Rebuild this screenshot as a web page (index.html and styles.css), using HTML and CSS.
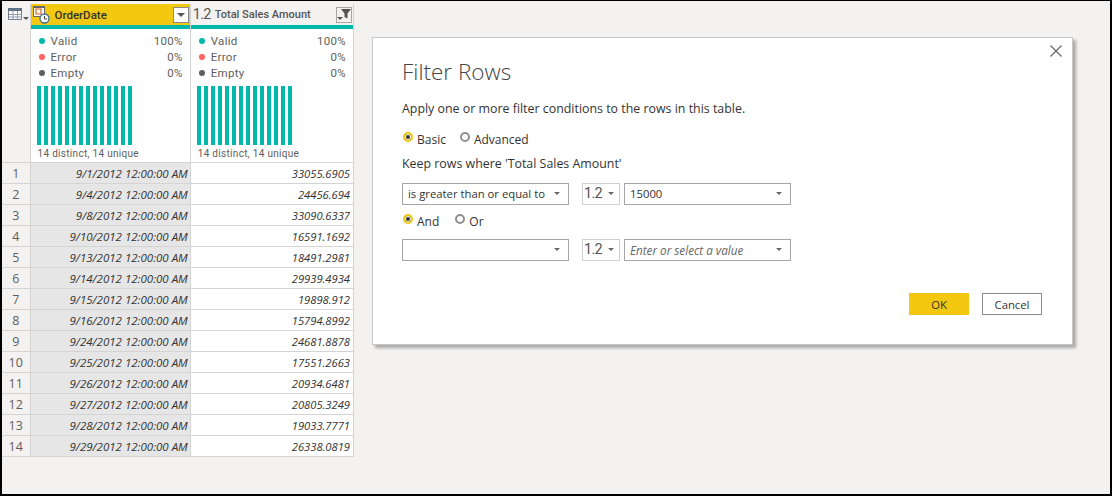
FILE: index.html
```html
<!DOCTYPE html>
<html lang="en">
<head>
    <meta charset="UTF-8">
    <title>Filter Rows</title>
    <link rel="stylesheet" href="styles.css">
</head>
<body>
    <div class="frame">
        <table class="grid">
            <thead>
                <tr class="head-row">
                    <th class="corner">
                        <svg width="21" height="13" viewBox="0 0 21 13">
                            <path d="M0.5 0.5h13v11h-13z" fill="#fff" stroke="#6b7a8c"/>
                            <path d="M0 0h14v3h-14z" fill="#5f7389"/>
                            <path d="M1 6.5h13M1 9h13M5 3v9M9.500 3v9" stroke="#8f9cab" fill="none"/>
                            <path d="M15 9h6l-3 3z" fill="#555"/>
                        </svg>
                    </th>
                    <th class="col-date selected">
                        <div class="head-cell">
                            <svg class="type-icon" width="17" height="20" viewBox="0 0 17 20">
                                <path d="M0.500 2.500h11v10h-11z" fill="#fff" stroke="#666"/>
                                <path d="M0 2h12v2h-12z" fill="#666"/>
                                <path d="M3 5h5v5h-5z" fill="none" stroke="#d4622a" stroke-width="1.200"/>
                                <circle cx="11.500" cy="14.500" r="4.500" fill="#fff" stroke="#3d6a8e" stroke-width="1.300"/>
                                <path d="M11.500 12v3h2.500" fill="none" stroke="#444"/>
                            </svg>
                            <span class="head-name name-on">OrderDate</span>
                            <span class="filter-btn btn-on">
                                <svg width="8" height="4" viewBox="0 0 8 4"><path d="M0 0h8l-4 4z" fill="#555"/></svg>
                            </span>
                        </div>
                    </th>
                    <th class="col-amount">
                        <div class="head-cell">
                            <span class="type-num">1.2</span>
                            <span class="head-name">Total Sales Amount</span>
                            <span class="filter-btn">
                                <svg width="14" height="12" viewBox="0 0 14 12">
                                    <path d="M4 0h10l-3.500 4.500v5l-3 -1.500v-3.500z" fill="#555"/>
                                    <path d="M0 8h6l-3 3z" fill="#555"/>
                                </svg>
                            </span>
                        </div>
                    </th>
                </tr>
                <tr class="profile-row">
                    <td class="num-blank"></td>
                    <td>
                        <div class="quality-bar"></div>
                        <div class="profile">
                            <div class="stat"><i class="dot dot-valid"></i><span class="stat-name">Valid</span><span>100%</span></div>
                            <div class="stat"><i class="dot dot-error"></i><span class="stat-name">Error</span><span>0%</span></div>
                            <div class="stat"><i class="dot dot-empty"></i><span class="stat-name">Empty</span><span>0%</span></div>
                            <div class="bars"><i></i><i></i><i></i><i></i><i></i><i></i><i></i><i></i><i></i><i></i><i></i><i></i><i></i><i></i></div>
                            <div class="distinct">14 distinct, 14 unique</div>
                        </div>
                    </td>
                    <td>
                        <div class="quality-bar"></div>
                        <div class="profile">
                            <div class="stat"><i class="dot dot-valid"></i><span class="stat-name">Valid</span><span>100%</span></div>
                            <div class="stat"><i class="dot dot-error"></i><span class="stat-name">Error</span><span>0%</span></div>
                            <div class="stat"><i class="dot dot-empty"></i><span class="stat-name">Empty</span><span>0%</span></div>
                            <div class="bars"><i></i><i></i><i></i><i></i><i></i><i></i><i></i><i></i><i></i><i></i><i></i><i></i><i></i><i></i></div>
                            <div class="distinct">14 distinct, 14 unique</div>
                        </div>
                    </td>
                </tr>
            </thead>
            <tbody>
                <tr><td class="num">1</td><td class="date">9/1/2012 12:00:00 AM</td><td class="amount">33055.6905</td></tr>
                <tr><td class="num">2</td><td class="date">9/4/2012 12:00:00 AM</td><td class="amount">24456.694</td></tr>
                <tr><td class="num">3</td><td class="date">9/8/2012 12:00:00 AM</td><td class="amount">33090.6337</td></tr>
                <tr><td class="num">4</td><td class="date">9/10/2012 12:00:00 AM</td><td class="amount">16591.1692</td></tr>
                <tr><td class="num">5</td><td class="date">9/13/2012 12:00:00 AM</td><td class="amount">18491.2981</td></tr>
                <tr><td class="num">6</td><td class="date">9/14/2012 12:00:00 AM</td><td class="amount">29939.4934</td></tr>
                <tr><td class="num">7</td><td class="date">9/15/2012 12:00:00 AM</td><td class="amount">19898.912</td></tr>
                <tr><td class="num">8</td><td class="date">9/16/2012 12:00:00 AM</td><td class="amount">15794.8992</td></tr>
                <tr><td class="num">9</td><td class="date">9/24/2012 12:00:00 AM</td><td class="amount">24681.8878</td></tr>
                <tr><td class="num">10</td><td class="date">9/25/2012 12:00:00 AM</td><td class="amount">17551.2663</td></tr>
                <tr><td class="num">11</td><td class="date">9/26/2012 12:00:00 AM</td><td class="amount">20934.6481</td></tr>
                <tr><td class="num">12</td><td class="date">9/27/2012 12:00:00 AM</td><td class="amount">20805.3249</td></tr>
                <tr><td class="num">13</td><td class="date">9/28/2012 12:00:00 AM</td><td class="amount">19033.7771</td></tr>
                <tr><td class="num">14</td><td class="date">9/29/2012 12:00:00 AM</td><td class="amount">26338.0819</td></tr>
            </tbody>
        </table>

        <div class="dialog">
            <button class="close" aria-label="Close">
                <svg width="12" height="12" viewBox="0 0 12 12"><path d="M0.500 0.500l11 11M11.500 0.500l-11 11" stroke="#666" stroke-width="1.200" fill="none"/></svg>
            </button>
            <h1>Filter Rows</h1>
            <p class="intro">Apply one or more filter conditions to the rows in this table.</p>
            <div class="radios mode">
                <label class="radio"><i class="mark on"></i>Basic</label>
                <label class="radio"><i class="mark"></i>Advanced</label>
            </div>
            <p class="keep">Keep rows where 'Total Sales Amount'</p>
            <div class="cond">
                <div class="select sel-op">is greater than or equal to<i class="caret"></i></div>
                <div class="select sel-type">1.2<i class="caret"></i></div>
                <div class="select sel-val">15000<i class="caret"></i></div>
            </div>
            <div class="radios andor">
                <label class="radio"><i class="mark on"></i>And</label>
                <label class="radio"><i class="mark"></i>Or</label>
            </div>
            <div class="cond cond-second">
                <div class="select sel-op"><i class="caret"></i></div>
                <div class="select sel-type">1.2<i class="caret"></i></div>
                <div class="select sel-val placeholder">Enter or select a value<i class="caret"></i></div>
            </div>
            <div class="actions">
                <button class="btn btn-ok">OK</button>
                <button class="btn btn-cancel">Cancel</button>
            </div>
        </div>
    </div>
</body>
</html>
```

FILE: styles.css
```css
html, body {
    margin: 0;
    padding: 0;
    height: 100%;
}
body {
    background-color: #f3f2f1;
    font-family: "Open Sans", sans-serif;
    color: #333;
}
.frame {
    box-sizing: border-box;
    height: 496px;
    border: 2px solid #000;
    border-top-width: 1px;
    padding-top: 3px;
    display: flex;
    align-items: flex-start;
}

/* data grid */
.grid {
    border-collapse: collapse;
    table-layout: fixed;
    width: 352px;
    font-size: 11px;
}
.grid th, .grid td {
    padding: 0;
    border: 1px solid #d4d4d4;
}
.grid th {
    border-top: 0;
    border-bottom: 0;
    height: 21px;
    font-weight: 400;
}
.corner {
    width: 28px;
    border-left: 0 !important;
    text-align: left;
    padding-left: 5px !important;
    box-sizing: border-box;
}
.corner svg {
    display: block;
    margin-left: 1px;
}
.col-date {
    width: 159px;
}
.col-amount {
    width: 162px;
}
.selected {
    background-color: #f2c811;
}
.head-cell {
    display: flex;
    align-items: center;
    height: 21px;
    padding: 0 1px 0 2px;
}
.type-icon {
    margin-top: -2px;
    flex: none;
}
.head-name {
    flex: 1;
    text-align: left;
    font-family: "Roboto", sans-serif;
    font-size: 11px;
    font-weight: 500;
    color: #555;
    margin-left: 4px;
    white-space: nowrap;
}
.name-on {
    color: #333;
    font-size: 11.500px;
    margin-left: 5px;
}
.type-num {
    font-family: "Roboto", sans-serif;
    font-size: 14.500px;
    letter-spacing: -0.7px;
    color: #555;
}
.filter-btn {
    box-sizing: border-box;
    width: 16px;
    height: 16px;
    border: 1px solid #a6a6a6;
    display: flex;
    align-items: center;
    justify-content: center;
    flex: none;
}
.btn-on {
    background-color: #fff;
    border-color: #8a8a8a;
}
.quality-bar {
    height: 4px;
    background-color: #01b8aa;
}
.profile-row td {
    background-color: #fff;
    vertical-align: top;
    height: 137px;
    border-top: 0;
    color: #605e5c;
}
.profile-row .num-blank {
    background-color: #f3f2f1;
    border-left: 0;
}
.profile {
    padding: 4px 6px 0 6px;
    font-family: "Roboto", sans-serif;
    font-size: 11.500px;
    letter-spacing: 0.3px;
}
.stat {
    display: flex;
    align-items: center;
    height: 16px;
    padding-right: 1px;
}
.stat-name {
    flex: 1;
}
.dot {
    width: 6px;
    height: 6px;
    border-radius: 50%;
    margin: 0 6px 0 2px;
}
.dot-valid {
    background-color: #01b8aa;
}
.dot-error {
    background-color: #fd625e;
}
.dot-empty {
    background-color: #605e5c;
}
.bars {
    display: flex;
    gap: 3px;
    height: 59px;
    margin-top: 5px;
}
.bars i {
    width: 4px;
    background-color: #01b8aa;
}
.distinct {
    font-size: 10px;
    margin-top: 3px;
    padding-left: 1px;
}
.grid tbody td {
    height: 20px;
    font-family: "Open Sans", sans-serif;
}
.num {
    background-color: #f3f2f1;
    border-left: 0 !important;
    color: #605e5c;
    font-size: 12.500px;
    text-align: center;
}
.date, .amount {
    text-align: right;
    font-style: italic;
    color: #333;
}
.date {
    background-color: #e6e6e6;
    font-size: 11.500px;
    padding-right: 2px !important;
}
.amount {
    background-color: #fff;
    font-size: 11.200px;
    padding-right: 3px !important;
}

/* dialog */
.dialog {
    position: relative;
    box-sizing: border-box;
    width: 701px;
    height: 308px;
    margin: 33px 0 0 18px;
    padding: 18px 28px 0 29px;
    background-color: #fff;
    border: 1px solid #c8c8c8;
    box-shadow: 3px 3px 3px rgba(0, 0, 0, 0.3);
    font-size: 12.400px;
}
.close {
    position: absolute;
    top: 7px;
    right: 10px;
    padding: 0;
    border: 0;
    background: none;
}
h1 {
    margin: 0;
    font-size: 22.500px;
    font-weight: 300;
    line-height: 32px;
    color: #444;
}
.intro {
    margin: 12px 0 0 0;
    line-height: 18px;
}
.radios {
    display: flex;
    line-height: 16px;
}
.mode {
    margin-top: 14px;
    gap: 13px;
}
.andor {
    margin-top: 9px;
    gap: 15px;
}
.radio {
    display: flex;
    align-items: center;
    font-size: 12px;
}
.mark {
    box-sizing: border-box;
    width: 10px;
    height: 10px;
    border: 2px solid #8f8f8f;
    border-radius: 50%;
    margin: -6px 4px 0 1px;
    background-color: #fff;
}
.mark.on {
    border-color: #f2c811;
    background-color: #333;
    box-shadow: inset 0 0 0 1px #fff;
}
.keep {
    margin: 7px 0 0 0;
    line-height: 18px;
}
.cond {
    display: flex;
    margin-top: 10px;
}
.cond-second {
    margin-top: 9px;
}
.select {
    position: relative;
    box-sizing: border-box;
    height: 22px;
    line-height: 20px;
    padding-left: 5px;
    border: 1px solid #a6a6a6;
    font-size: 11.300px;
}
.sel-op {
    width: 167px;
}
.sel-type {
    width: 38px;
    margin-left: 13px;
    border-color: #d0d0d0;
    font-family: "Roboto", sans-serif;
    font-size: 14.500px;
    letter-spacing: -0.7px;
    color: #555;
    padding-left: 1px;
}
.sel-val {
    width: 167px;
    margin-left: 4px;
}
.placeholder {
    font-size: 11.700px;
    font-style: italic;
    color: #666;
}
.caret {
    position: absolute;
    top: 8px;
    right: 8px;
    width: 0;
    height: 0;
    border-left: 3px solid transparent;
    border-right: 3px solid transparent;
    border-top: 3px solid #666;
}
.sel-type .caret {
    right: 5px;
}
.actions {
    display: flex;
    justify-content: flex-end;
    gap: 13px;
    margin-top: 32px;
    padding-right: 2px;
}
.btn {
    box-sizing: border-box;
    width: 60px;
    height: 22px;
    padding: 0;
    font-family: "Open Sans", sans-serif;
    font-size: 11.300px;
    color: #333;
    background-color: #fff;
    border: 1px solid #8a8a8a;
}
.btn-ok {
    background-color: #f2c811;
    border-color: #f2c811;
}
```
